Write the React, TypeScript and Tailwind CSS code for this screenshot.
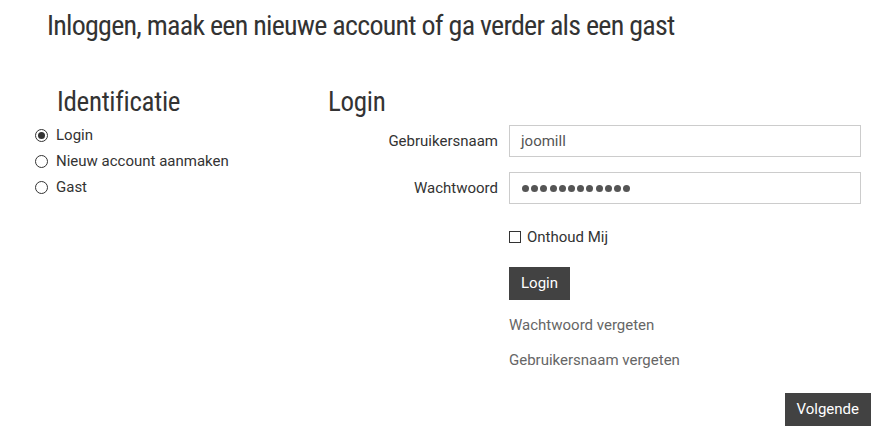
const head = { fontFamily: "'Roboto Condensed', 'Liberation Sans', sans-serif" };
const body = { fontFamily: "Roboto, 'Liberation Sans', sans-serif" };

function Radio({ checked, label }: { checked?: boolean; label: string }) {
  return (
    <div className="flex items-center h-[26px]">
      <span className="w-[13px] h-[13px] rounded-full border border-[#333] flex items-center justify-center mr-[8px]">
        {checked && <span className="w-[7px] h-[7px] rounded-full bg-[#333]" />}
      </span>
      <span className="text-[15px] text-[#333]">{label}</span>
    </div>
  );
}

export default function App() {
  const dots = Array.from({ length: 12 });
  return (
    <div className="w-[892px] h-[434px] bg-white text-[#333] relative" style={body}>
      <h1 className="pl-[47px] pt-[8px] text-[28px] leading-[36px] tracking-[-0.75px] text-[#333]" style={head}>
        Inloggen, maak een nieuwe account of ga verder als een gast
      </h1>
      <div className="flex pl-[35px] pt-[42px]">
        <div className="w-[293px]">
          <h2 className="pl-[22px] text-[27px] leading-[32px] tracking-[-0.3px]" style={head}>Identificatie</h2>
          <div className="pt-[4px]">
            <Radio checked label="Login" />
            <Radio label="Nieuw account aanmaken" />
            <Radio label="Gast" />
          </div>
        </div>
        <div className="w-[533px]">
          <h2 className="text-[27px] leading-[32px] tracking-[-0.3px]" style={head}>Login</h2>
          <div className="pt-[7px] flex flex-col gap-[15px]">
            <div className="flex items-center">
              <label className="w-[170px] text-right text-[15px]">Gebruikersnaam</label>
              <div className="ml-[11px] w-[352px] h-[32px] border border-[#ccc] flex items-center pl-[11px] text-[15px] text-[#555]">joomill</div>
            </div>
            <div className="flex items-center">
              <label className="w-[170px] text-right text-[15px]">Wachtwoord</label>
              <div className="ml-[11px] w-[352px] h-[32px] border border-[#ccc] flex items-center pl-[12px] gap-[2.2px]">
                {dots.map((_, i) => (
                  <span key={i} className="w-[7px] h-[7px] rounded-full bg-[#555]" />
                ))}
              </div>
            </div>
          </div>
          <div className="pl-[181px]">
            <div className="flex items-center mt-[26px] h-[14px]">
              <span className="w-[12px] h-[12px] border border-[#333] mr-[6px]" />
              <span className="text-[15px]">Onthoud Mij</span>
            </div>
            <button className="mt-[23px] h-[33px] px-[12px] bg-[#424242] text-white text-[15px]">Login</button>
            <div className="mt-[16px] text-[15px] text-[#666] leading-[18px]">Wachtwoord vergeten</div>
            <div className="mt-[17px] text-[15px] text-[#666] leading-[18px]">Gebruikersnaam vergeten</div>
          </div>
        </div>
      </div>
      <div className="flex justify-end pr-[21px] mt-[24px]">
        <button className="h-[33px] px-[12px] bg-[#424242] text-white text-[15px]">Volgende</button>
      </div>
    </div>
  );
}
